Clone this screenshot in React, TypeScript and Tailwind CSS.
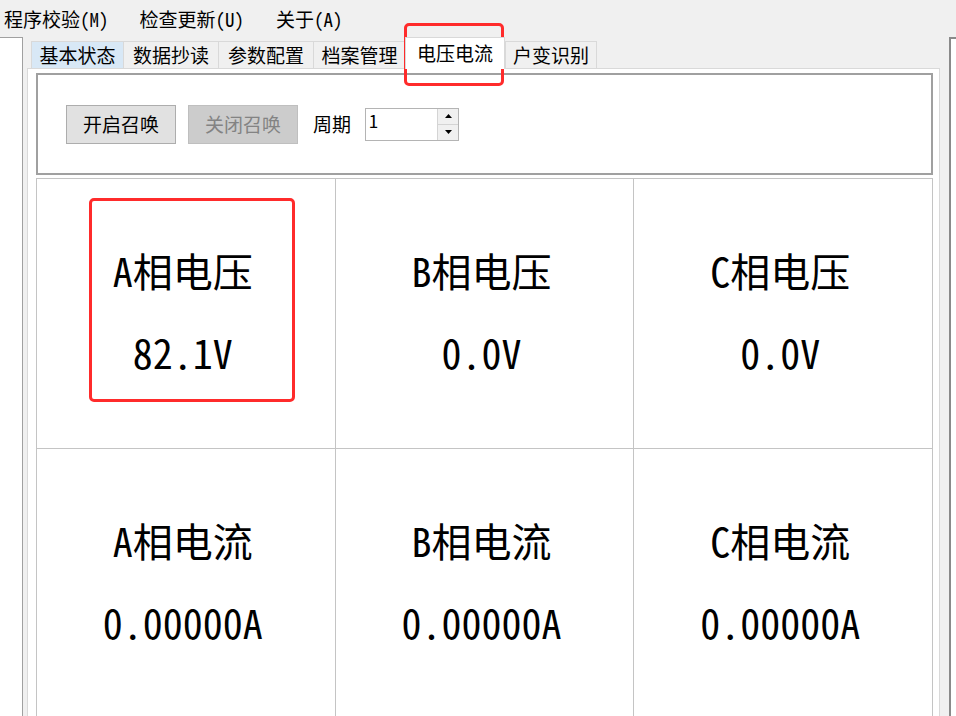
import React from 'react';

const cjk = { fontFamily: '"Noto Sans CJK SC", "Noto Sans", sans-serif', fontFeatureSettings: '"hwid"' };

const tabs = [
  { name: '基本状态', w: 'w-[92px]' },
  { name: '数据抄读', w: 'w-[95px]' },
  { name: '参数配置', w: 'w-[95px]' },
  { name: '档案管理', w: 'w-[92px]' },
  { name: '电压电流', w: 'w-[100px]' },
  { name: '户变识别', w: 'w-[92px]' },
];

const cells = [
  { label: 'A相电压', value: '82.1V' },
  { label: 'B相电压', value: '0.0V' },
  { label: 'C相电压', value: '0.0V' },
  { label: 'A相电流', value: '0.00000A' },
  { label: 'B相电流', value: '0.00000A' },
  { label: 'C相电流', value: '0.00000A' },
];

export default function App() {
  return (
    <div className="relative w-[956px] h-[716px] overflow-hidden bg-[#f0f0f0] text-black" style={cjk}>
      {/* 菜单栏 */}
      <div className="h-[37px] flex items-center text-[19px] leading-none">
        <span className="ml-[4px]">程序校验(M)</span>
        <span className="ml-[31px]">检查更新(U)</span>
        <span className="ml-[32px]">关于(A)</span>
      </div>

      <div className="flex h-[679px]">
        {/* 左侧面板 */}
        <div className="w-[23px] bg-white border-t border-r border-[#a0a0a0]" />

        {/* 主区域 */}
        <div className="ml-[4px] w-[913px] flex flex-col">
          <div className="h-[31px] flex items-end pl-[4px]">
            {tabs.map((t, i) =>
              t.name === '电压电流' ? (
                <div key={t.name} className={`h-[32px] ${t.w} bg-white border-t border-x border-[#d9d9d9] flex items-center justify-center text-[19px] -mb-px z-10`}>
                  {t.name}
                </div>
              ) : (
                <div
                  key={t.name}
                  className={`h-[27px] ${t.w} border-t border-l border-[#d9d9d9] flex items-center justify-center text-[19px] ${i === 0 ? 'bg-[#d8e8f6]' : 'bg-[#f0f0f0]'} ${i === 5 ? 'border-r' : ''}`}
                >
                  {t.name}
                </div>
              )
            )}
          </div>

          {/* 标签页 */}
          <div className="flex-1 bg-white border border-[#d9d9d9] pt-[4px] pl-[8px] pr-[6px]">
            <div className="h-[102px] border-2 border-[#a0a0a0] flex items-center pl-[28px] text-[19px]">
              <button className="w-[110px] h-[39px] bg-[#e1e1e1] border border-[#adadad] text-black">开启召唤</button>
              <button className="ml-[12px] w-[110px] h-[39px] bg-[#cccccc] border border-[#bfbfbf] text-[#838383]">关闭召唤</button>
              <span className="ml-[15px]">周期</span>
              <div className="ml-[14px] w-[94px] h-[33px] border border-[#b4b4b4] flex">
                <span className="flex-1 pl-[3px] leading-[22px] text-[18px]">1</span>
                <div className="w-[21px] flex flex-col border-l border-[#d4d4d4]">
                  <div className="flex-1 flex items-center justify-center bg-[#f0f0f0] border-b border-[#d4d4d4]">
                    <svg width="7" height="4" viewBox="0 0 7 4"><path d="M3.5 0L7 4H0z" fill="#000" /></svg>
                  </div>
                  <div className="flex-1 flex items-center justify-center bg-[#f0f0f0]">
                    <svg width="7" height="4" viewBox="0 0 7 4"><path d="M0 0h7L3.5 4z" fill="#000" /></svg>
                  </div>
                </div>
              </div>
            </div>

            <div className="mt-[3px] grid grid-cols-3 border-t border-l border-[#c4c4c4]">
              {cells.map((c, i) => (
                <div key={c.label} className="relative h-[270px] pr-[6px] border-r border-b border-[#c4c4c4] flex flex-col items-center">
                  <div className="mt-[67px] text-[40px] leading-[48px]">{c.label}</div>
                  <div className="mt-[34px] text-[40px] leading-[48px]">{c.value}</div>
                  {i === 0 && (
                    <div className="absolute left-[52px] top-[19px] w-[206px] h-[204px] border-[3px] border-[#ff2b2b] rounded-[5px]" />
                  )}
                </div>
              ))}
            </div>
          </div>
        </div>

        {/* 右侧面板 */}
        <div className="ml-[9px] flex-1 bg-white border-t-2 border-l-2 border-[#8a8a8a]" />
      </div>

      {/* 标注框 */}
      <div className="absolute left-[404px] top-[23px] w-[100px] h-[63px] border-[3px] border-[#ff2b2b] rounded-[5px]" />
    </div>
  );
}
